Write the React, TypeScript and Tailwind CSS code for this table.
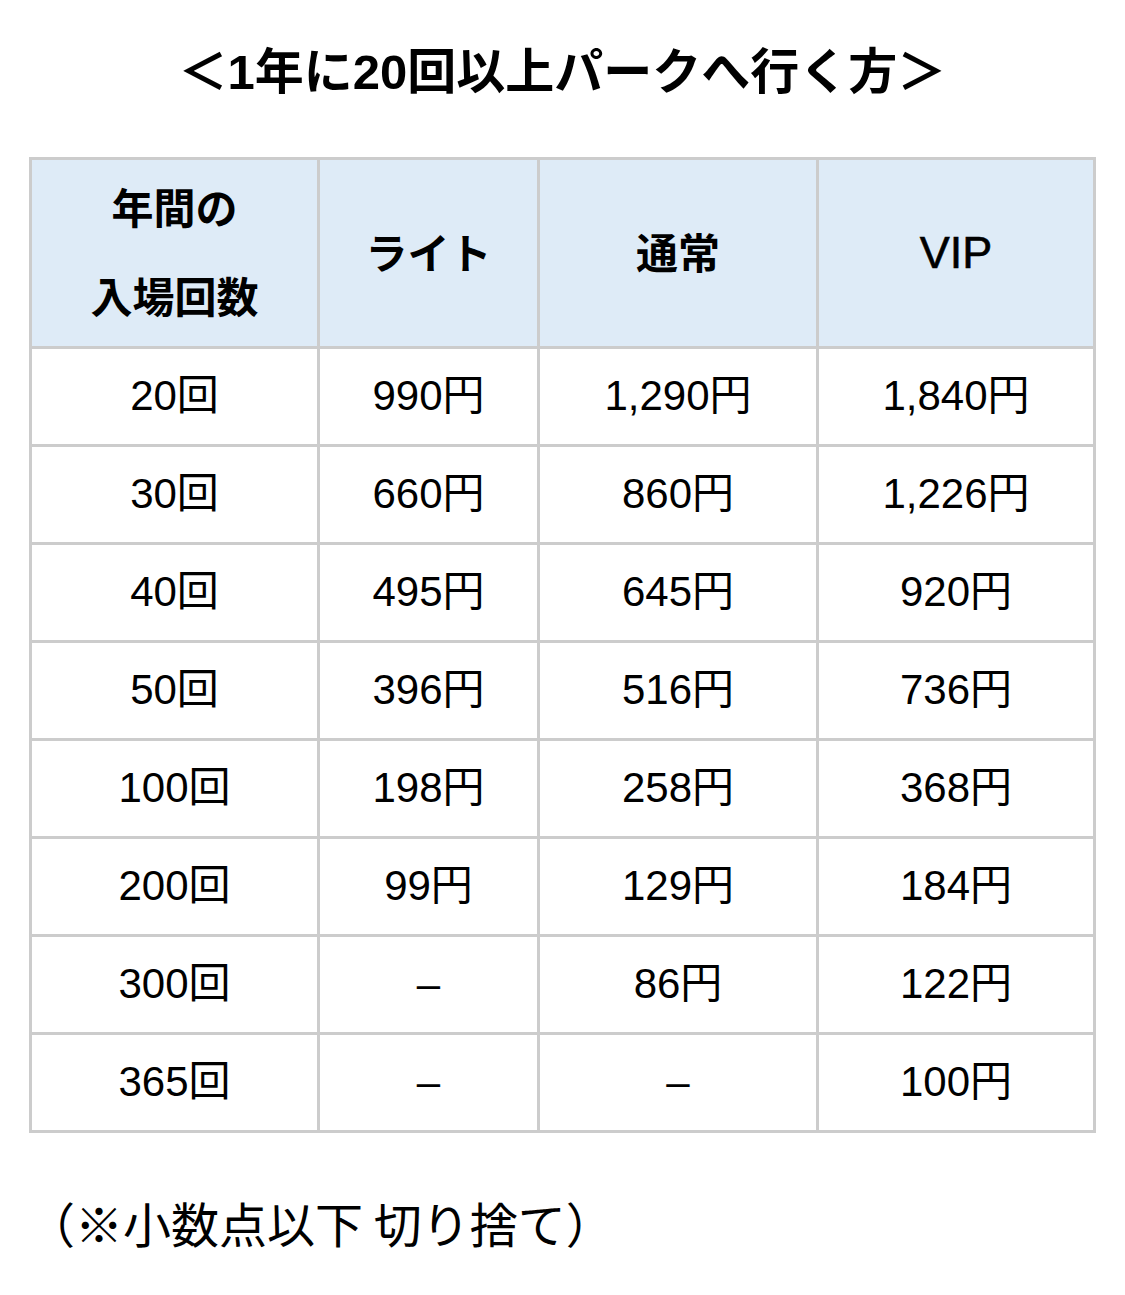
import React from "react";

const rows: [string, string, string, string][] = [
  ["20回", "990円", "1,290円", "1,840円"],
  ["30回", "660円", "860円", "1,226円"],
  ["40回", "495円", "645円", "920円"],
  ["50回", "396円", "516円", "736円"],
  ["100回", "198円", "258円", "368円"],
  ["200回", "99円", "129円", "184円"],
  ["300回", "–", "86円", "122円"],
  ["365回", "–", "–", "100円"],
];

const mixed = '"Liberation Sans", "Noto Sans CJK JP", sans-serif';
const cjk = '"Noto Sans CJK JP", "Noto Sans", sans-serif';

export default function App() {
  return (
    <div className="w-[1125px] h-[1295px] bg-white text-black" style={{ fontFamily: cjk }}>
      <div className="pt-[37px] h-[157px]">
        <h1 className="text-center text-[49px] font-bold leading-[70px]" style={{ fontFamily: mixed }}>
          ＜1年に20回以上パークへ行く方＞
        </h1>
      </div>
      <table className="ml-[29px] w-[1066px] border-collapse table-fixed">
        <colgroup>
          <col className="w-[288px]" />
          <col className="w-[220px]" />
          <col className="w-[279px]" />
          <col className="w-[277px]" />
        </colgroup>
        <thead>
          <tr className="h-[189px] bg-[#deebf7]">
            <th className="border-[3px] border-[#cccccc] text-[42px] font-bold leading-[89px] p-0 pb-[6px]">
              年間の
              <br />
              入場回数
            </th>
            <th className="border-[3px] border-[#cccccc] text-[42px] font-bold p-0 pb-[6px]">ライト</th>
            <th className="border-[3px] border-[#cccccc] text-[42px] font-bold p-0 pb-[6px]">通常</th>
            <th
              className="border-[3px] border-[#cccccc] text-[45px] font-normal p-0"
              style={{ fontFamily: mixed, WebkitTextStroke: "0.6px black" }}
            >
              VIP
            </th>
          </tr>
        </thead>
        <tbody>
          {rows.map((r, i) => (
            <tr key={i} className="h-[98px]">
              {r.map((c, j) => (
                <td
                  key={j}
                  className="border-[3px] border-[#cccccc] text-center text-[42px] font-normal p-0 pb-[2px]"
                  style={{ fontFamily: mixed }}
                >
                  {c}
                </td>
              ))}
            </tr>
          ))}
        </tbody>
      </table>
      <p className="mt-[57px] ml-[27px] text-[48px] font-normal leading-[64px]">
        （※小数点以下 切り捨て）
      </p>
    </div>
  );
}
